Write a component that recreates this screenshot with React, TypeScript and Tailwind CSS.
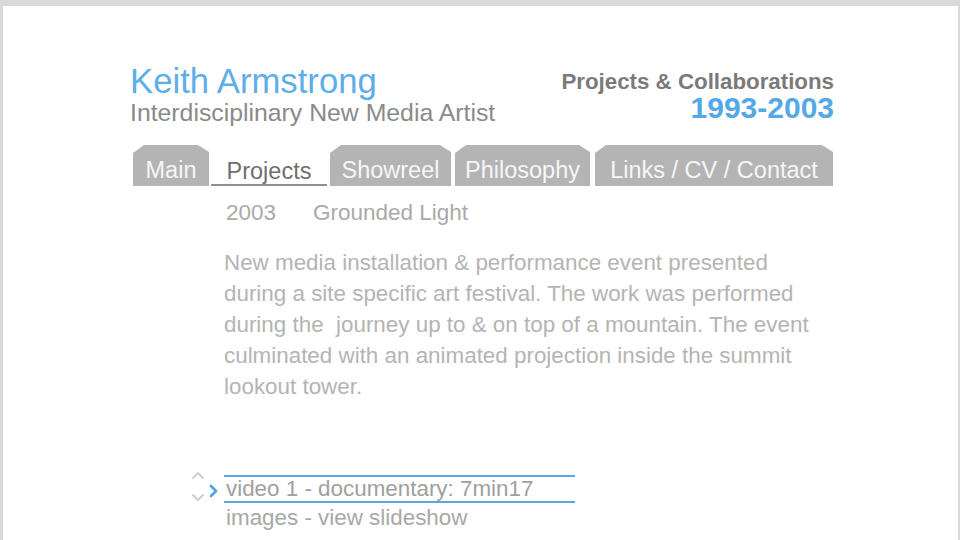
import React from 'react';

interface TabProps {
  label: string;
  width: string;
  active?: boolean;
}

const tabShape = '[clip-path:polygon(0_8px,11px_0,calc(100%-11px)_0,100%_7px,100%_100%,0_100%)]';

const Tab: React.FC<TabProps> = ({ label, width, active }) => {
  if (active) {
    return (
      <div className={`${width} h-[41px] flex items-center justify-center bg-white border-b-2 border-[#8f8f8f] text-[#6f6f6f] text-[23.5px] pt-[14px]`}>
        {label}
      </div>
    );
  }
  return (
    <div className={`${width} h-[41px] flex items-center justify-center bg-[#b4b4b4] text-[#f6f6f6] text-[23.5px] pt-[10px] ${tabShape}`}>
      {label}
    </div>
  );
};

const Chevron: React.FC<{ dir: 'up' | 'down' | 'right'; className: string }> = ({ dir, className }) => {
  const d = dir === 'up' ? 'M2 8 L7 3 L12 8' : dir === 'down' ? 'M2 3 L7 8 L12 3' : 'M3 2 L8 7 L3 12';
  const size = dir === 'right' ? { w: 11, h: 14 } : { w: 14, h: 11 };
  return (
    <svg width={size.w} height={size.h} viewBox={`0 0 ${size.w} ${size.h}`} className={className}>
      <path d={d} fill="none" stroke="currentColor" strokeWidth={dir === 'right' ? 2.6 : 2} strokeLinecap="round" strokeLinejoin="round" />
    </svg>
  );
};

const App: React.FC = () => {
  const tabs = [
    { label: 'Main', width: 'w-[76px]' },
    { label: 'Projects', width: 'w-[116px]', active: true },
    { label: 'Showreel', width: 'w-[121px]' },
    { label: 'Philosophy', width: 'w-[135px]' },
    { label: 'Links / CV / Contact', width: 'w-[238px]' },
  ];

  return (
    <div className="w-[960px] h-[540px] overflow-hidden bg-[#d9d9d9] pt-[6px] pl-[3px] pr-[2px] font-['Liberation_Sans',Arial,sans-serif]">
      <div className="h-full bg-white pl-[127px] pt-[52px]">
        <div className="w-[706px]">
          {/* header */}
          <div className="flex justify-between">
            <div className="pt-[6px]">
              <div className="text-[34.7px] leading-[34px] text-[#5eaeea]">Keith Armstrong</div>
              <div className="mt-[2px] text-[24.8px] leading-[25px] text-[#8a8a8a]">Interdisciplinary New Media Artist</div>
            </div>
            <div className="flex flex-col items-end pt-[13px] pr-[2px]">
              <div className="text-[22.3px] leading-[22px] font-bold text-[#7a7a7a]">Projects &amp; Collaborations</div>
              <div className="text-[30px] leading-[30px] font-bold text-[#55a8e6]">1993-2003</div>
            </div>
          </div>

          {/* tabs */}
          <div className="mt-[20px] ml-[3px] flex items-end">
            <Tab {...tabs[0]} />
            <div className="w-[2px]" />
            <Tab {...tabs[1]} />
            <div className="w-[3px]" />
            <Tab {...tabs[2]} />
            <div className="w-[4px]" />
            <Tab {...tabs[3]} />
            <div className="w-[5px]" />
            <Tab {...tabs[4]} />
          </div>

          {/* project */}
          <div className="pl-[94px] text-[#aaaaaa]">
            <div className="mt-[14px] flex text-[22.5px] leading-[26px]">
              <span className="w-[89px] pl-[2px]">2003</span>
              <span>Grounded Light</span>
            </div>
            <p className="mt-[21px] text-[22.4px] leading-[31px] text-[#b4b4b4]">
              New media installation &amp; performance event presented<br />
              during a site specific art festival. The work was performed<br />
              during the&nbsp; journey up to &amp; on top of a mountain. The event<br />
              culminated with an animated projection inside the summit<br />
              lookout tower.
            </p>
          </div>

          {/* media links */}
          <div className="mt-[73px] ml-[60px] flex">
            <div className="w-[34px] flex items-start">
              <div className="flex flex-col items-center w-[16px] -mt-[5px]">
                <Chevron dir="up" className="text-[#cfcfcf]" />
                <div className="h-[11px]" />
                <Chevron dir="down" className="text-[#cfcfcf]" />
              </div>
              <Chevron dir="right" className="mt-[9px] ml-[2px] text-[#4ea2e2]" />
            </div>
            <div className="w-[351px]">
              <div className="border-y-2 border-[#5ba8e6] text-[22.4px] leading-[24px] text-[#a0a0a0] pl-[2px]">
                video 1 - documentary: 7min17
              </div>
              <div className="mt-[2px] pl-[2px] text-[22.4px] leading-[26px] text-[#a8a8a8]">images - view slideshow</div>
            </div>
          </div>
        </div>
      </div>
    </div>
  );
};

export default App;
